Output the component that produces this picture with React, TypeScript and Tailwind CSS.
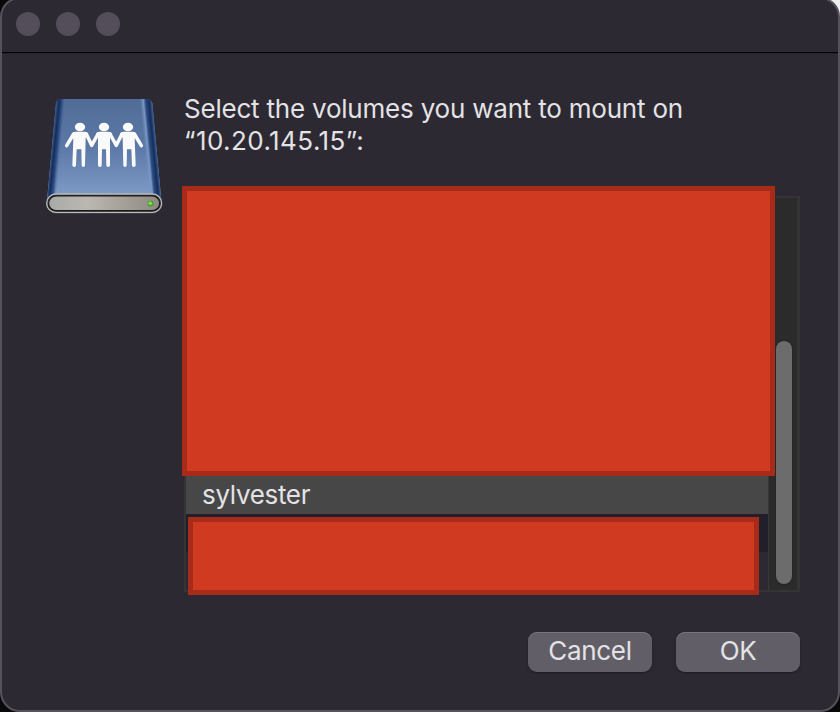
function SharedDriveIcon() {
  return (
    <svg width="120" height="120" viewBox="27 30 360 360" aria-label="Network volume">
      <defs>
        <linearGradient id="face" x1="0" y1="0" x2="0" y2="1">
          <stop offset="0" stopColor="#506c96" />
          <stop offset="0.5" stopColor="#5d7aa8" />
          <stop offset="1" stopColor="#829ecb" />
        </linearGradient>
        <linearGradient id="leftShade" gradientUnits="userSpaceOnUse" x1="46" y1="187" x2="76" y2="190">
          <stop offset="0" stopColor="#3c5f95" />
          <stop offset="0.3" stopColor="#152c58" />
          <stop offset="0.6" stopColor="#2d4d82" />
          <stop offset="1" stopColor="#5d7aa8" stopOpacity="0" />
        </linearGradient>
        <linearGradient id="rightShade" gradientUnits="userSpaceOnUse" x1="326" y1="190" x2="362" y2="186.500">
          <stop offset="0" stopColor="#7895c4" stopOpacity="0" />
          <stop offset="0.28" stopColor="#7895c4" />
          <stop offset="0.45" stopColor="#2d4e84" />
          <stop offset="0.75" stopColor="#162d59" />
          <stop offset="1" stopColor="#3f639a" />
        </linearGradient>
        <linearGradient id="front" x1="0" y1="0" x2="1" y2="0">
          <stop offset="0" stopColor="#a9aaa7" />
          <stop offset="0.35" stopColor="#bbb8b1" />
          <stop offset="1" stopColor="#8e8880" />
        </linearGradient>
      </defs>
      <path d="M60 52Q64 39 77 39H332Q345 39 349 52L376 345H33Z" fill="url(#face)" />
      <path d="M60 52Q64 39 77 39H90L62 345H33Z" fill="url(#leftShade)" />
      <path d="M310 39H332Q345 39 349 52L376 345H340Z" fill="url(#rightShade)" />
      <rect x="32" y="326" width="345" height="56" rx="28" fill="#77787a" />
      <rect x="32" y="324" width="345" height="55" rx="27.500" fill="#303033" stroke="#b9bbb9" strokeWidth="4" />
      <rect x="38" y="330" width="333" height="44" rx="22" fill="url(#front)" stroke="#18191b" strokeWidth="3.500" />
      <circle cx="344" cy="353" r="8.500" fill="#459a2f" />
      <circle cx="343" cy="352" r="5.500" fill="#74eb40" />
      <g fill="#fafafa" stroke="#fafafa" strokeLinecap="round" strokeLinejoin="round">
        <g strokeWidth="0">
          <ellipse cx="132" cy="123" rx="15.500" ry="13" />
          <ellipse cx="204" cy="123" rx="15.500" ry="13" />
          <ellipse cx="276" cy="123" rx="15.500" ry="13" />
          <path d="M107 143Q111 137 118 137H147Q153 137 157 143L149 156L147 238Q147 243 142 243Q137 243 137 238L136 190H122L120 238Q120 243 115 243Q109 243 109 238L112 158Z" />
          <path d="M180 143Q184 137 190 137H218Q225 137 229 143L222 157L222 238Q222 243 216 243Q211 243 211 238L210 190H198L197 238Q197 243 192 243Q186 243 186 238L186 157Z" />
          <path d="M252 143Q256 137 262 137H291Q297 137 301 143L296 158L299 238Q299 243 293 243Q288 243 288 238L286 190H273L272 238Q272 243 267 243Q262 243 262 238L260 156Z" />
        </g>
        <path d="M113 144L92 179M151 144L167 178L186 144M222 144L241 178L258 144M295 144L316 179" fill="none" strokeWidth="10.500" />
      </g>
    </svg>
  );
}

const volumes = [
  { name: '', style: 'bg-[#2c2933]' },
  { name: '', style: 'bg-[#211f29]' },
  { name: '', style: 'bg-[#2c2933]' },
  { name: '', style: 'bg-[#211f29]' },
  { name: '', style: 'bg-[#2c2933]' },
  { name: '', style: 'bg-[#211f29]' },
  { name: '', style: 'bg-[#2c2933]' },
  { name: 'sylvester', style: 'bg-[#474747]' },
  { name: '', style: 'bg-[#211f29]' },
  { name: '', style: 'bg-[#2c2933]' },
];

function VolumeList() {
  return (
    <div className="relative flex h-[396px] w-[616px] border-2 border-r-[3px] border-[#343434] bg-[#2b2b2b]">
      <div className="flex w-[582px] flex-col justify-end overflow-hidden">
        {volumes.map((volume, i) => (
          <div key={i} className={`flex h-[38px] shrink-0 items-center pl-4 text-[26px] leading-[38px] ${volume.style}`}>
            <span className="tracking-[-0.33px]">{volume.name}</span>
          </div>
        ))}
      </div>
      <div className="flex flex-1 items-end border-l border-[#383838] pb-[6px] pl-[7px]">
        <div className="h-[243px] w-4 rounded-full bg-[#6c6c6c] shadow-[0_0_2px_#1c1c1c]" />
      </div>
      <div className="absolute -left-1 -top-3 h-[290px] w-[593px] border-[5px] border-[#a62b18] bg-[#d03a20]" />
      <div className="absolute left-[2px] top-[319px] h-[78px] w-[571px] border-[5px] border-[#a62b18] bg-[#d03a20]" />
    </div>
  );
}

const buttonClass =
  'h-10 w-[124px] rounded-[9px] bg-[#625e68] text-[26px] tracking-[-0.3px] leading-[38px] pb-[2px] shadow-[inset_0_1px_0_#79757f,0_1px_2px_#1d1b23]';

export default function App() {
  return (
    <div className="h-[712px] w-[840px] overflow-hidden bg-[linear-gradient(to_bottom_left,#eeeeee_0px,#eeeeee_20px,#09080b_21px)]">
      <div className="-mt-[3px] flex h-[715px] flex-col rounded-[20px] border-2 border-[#55525c] bg-[#2c2933] font-['Inter','Liberation_Sans',sans-serif] font-[420] text-[#e3e2e4]">
        <header className="flex h-[54px] shrink-0 items-center gap-4 border-b border-black pb-[3px] pl-[14px] shadow-[0_1px_0_#25222b]">
          <span className="size-6 rounded-full bg-[#534e59]" />
          <span className="size-6 rounded-full bg-[#534e59]" />
          <span className="size-6 rounded-full bg-[#534e59]" />
        </header>
        <main className="flex pl-[43px] pt-10">
          <div className="mt-[3px] w-[139px] shrink-0">
            <SharedDriveIcon />
          </div>
          <div>
            <p className="h-[103px] text-[26px] leading-8">
              <span className="tracking-[-0.21px]">Select the volumes you want to mount on</span>
              <br />
              <span className="tracking-[0.43px]">“10.20.145.15”:</span>
            </p>
            <VolumeList />
          </div>
        </main>
        <footer className="mt-10 flex justify-end gap-6 pr-[38px]">
          <button className={buttonClass}>Cancel</button>
          <button className={buttonClass}>OK</button>
        </footer>
      </div>
    </div>
  );
}
